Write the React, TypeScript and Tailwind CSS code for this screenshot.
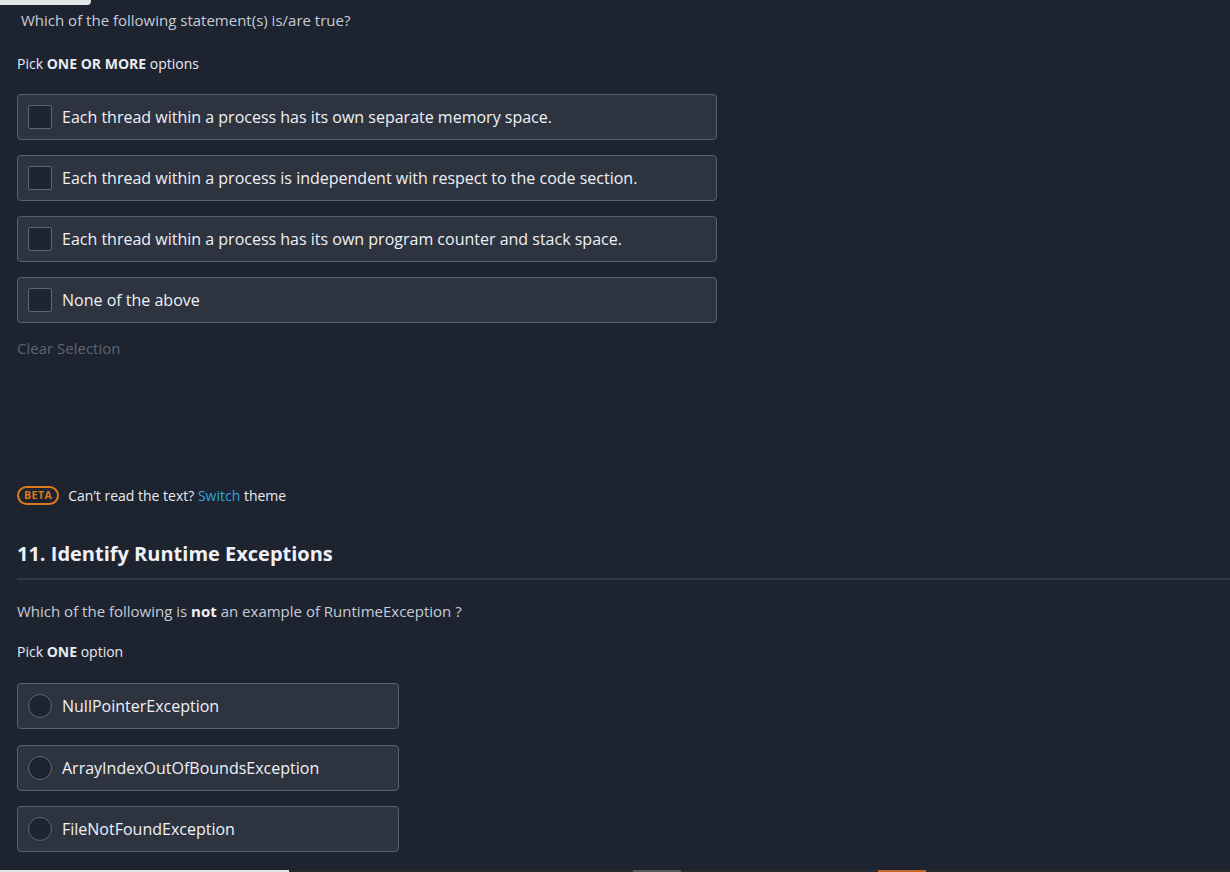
import React from "react";

const checks = [
  "Each thread within a process has its own separate memory space.",
  "Each thread within a process is independent with respect to the code section.",
  "Each thread within a process has its own program counter and stack space.",
  "None of the above",
];
const radios = ["NullPointerException", "ArrayIndexOutOfBoundsException", "FileNotFoundException"];

export default function App() {
  return (
    <div
      className="relative w-[1230px] h-[872px] overflow-hidden bg-[#1e2330] text-[#e8ebf0]"
      style={{ fontFamily: '"Open Sans", "Noto Sans", sans-serif' }}
    >
      <div className="absolute left-0 top-0 w-[91px] h-[5px] bg-[#e4e5e8] rounded-br-[4px]" />
      <div className="flex flex-col px-[17px]">
        <div className="pt-[9px] pl-[4px] text-[15px] leading-[22px] text-[#c5ccd8]">
          Which of the following statement(s) is/are true?
        </div>
        <div className="mt-[23px] text-[14px] leading-[20px] text-[#e8ebf0]">
          Pick <span className="font-bold">ONE OR MORE</span> options
        </div>
        <div className="mt-[20px] flex flex-col gap-[15px] w-[700px]">
          {checks.map((c) => (
            <div
              key={c}
              className="h-[46px] flex items-center rounded-[4px] border border-[#5a606c] bg-[#2e3340]"
            >
              <div className="ml-[10px] w-[24px] h-[24px] rounded-[2px] border border-[#5f6571] bg-[#1f2431]" />
              <span className="ml-[10px] text-[16px] text-[#eef1f5]">{c}</span>
            </div>
          ))}
        </div>
        <div className="mt-[14px] text-[15px] leading-[22px] text-[#5b6476]">Clear Selection</div>
        <div className="mt-[126px] flex items-center">
          <span className="h-[19px] px-[5px] flex items-center rounded-full border-2 border-[#df7a1c] text-[#df7a1c] text-[10.5px] font-bold tracking-[0.5px] leading-none">
            BETA
          </span>
          <span className="ml-[9px] text-[14px] text-[#e8ebf0]">
            Can’t read the text? <span className="text-[#2ea6df]">Switch</span> theme
          </span>
        </div>
        <div className="mt-[34px] text-[20px] leading-[28px] font-bold text-[#eef1f6]">
          11. Identify Runtime Exceptions
        </div>
        <div className="mt-[10px] h-[2px] bg-[#323746] mr-[-17px]" />
        <div className="mt-[20px] text-[15px] leading-[22px] text-[#c5ccd8]">
          Which of the following is <span className="font-bold text-[#eef1f6]">not</span> an example of RuntimeException ?
        </div>
        <div className="mt-[20px] text-[14px] leading-[20px] text-[#e8ebf0]">
          Pick <span className="font-bold">ONE</span> option
        </div>
        <div className="mt-[21px] flex flex-col gap-[15.5px] w-[382px]">
          {radios.map((r) => (
            <div
              key={r}
              className="h-[46px] flex items-center rounded-[4px] border border-[#5a606c] bg-[#2e3340]"
            >
              <div className="ml-[10px] w-[24px] h-[24px] rounded-full border border-[#5f6571] bg-[#1f2431]" />
              <span className="ml-[10px] text-[16px] text-[#eef1f5]">{r}</span>
            </div>
          ))}
        </div>
      </div>
      <div className="absolute left-0 bottom-0 w-full h-[2px] flex bg-[#2a2b2e]">
        <div className="w-[289px] h-full bg-[#e6e6e6]" />
        <div className="ml-[344px] w-[48px] h-full bg-[#5a5a5a]" />
        <div className="ml-[197px] w-[48px] h-full bg-[#c2692a]" />
      </div>
    </div>
  );
}
